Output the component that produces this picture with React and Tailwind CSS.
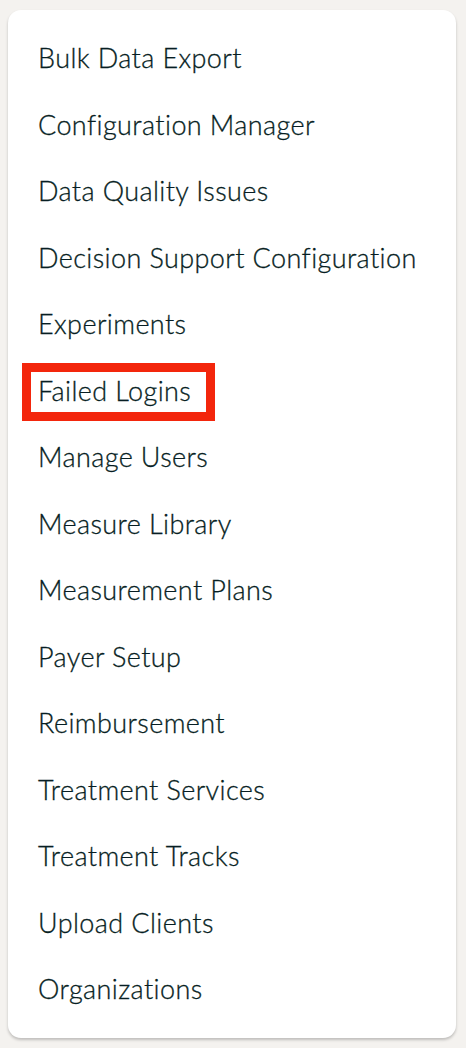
const items = [
  'Bulk Data Export',
  'Configuration Manager',
  'Data Quality Issues',
  'Decision Support Configuration',
  'Experiments',
  'Failed Logins',
  'Manage Users',
  'Measure Library',
  'Measurement Plans',
  'Payer Setup',
  'Reimbursement',
  'Treatment Services',
  'Treatment Tracks',
  'Upload Clients',
  'Organizations',
];

export default function App() {
  return (
    <div className="min-h-[1048px] w-[466px] bg-[#f4f2ef] pt-[10px] pl-[8px]" style={{ fontFamily: 'Lato, "Noto Sans", sans-serif' }}>
      <div className="w-[448px] rounded-[13px] bg-white py-[15px] shadow-[0_2px_3px_rgba(0,0,0,0.22)]">
        {items.map((label) => (
          <div key={label} className="relative flex h-[66.5px] items-center pl-[30px] text-[27px] font-light tracking-[0.4px] text-[#071e23] [font-variant-ligatures:none] [-webkit-text-stroke:0.3px_#071e23]">
            {label === 'Failed Logins' && (
              <div className="absolute left-[14px] top-[5px] h-[58px] w-[193px] border-[9px] border-[#f3260c]" />
            )}
            <span className="relative">{label}</span>
          </div>
        ))}
      </div>
    </div>
  );
}
